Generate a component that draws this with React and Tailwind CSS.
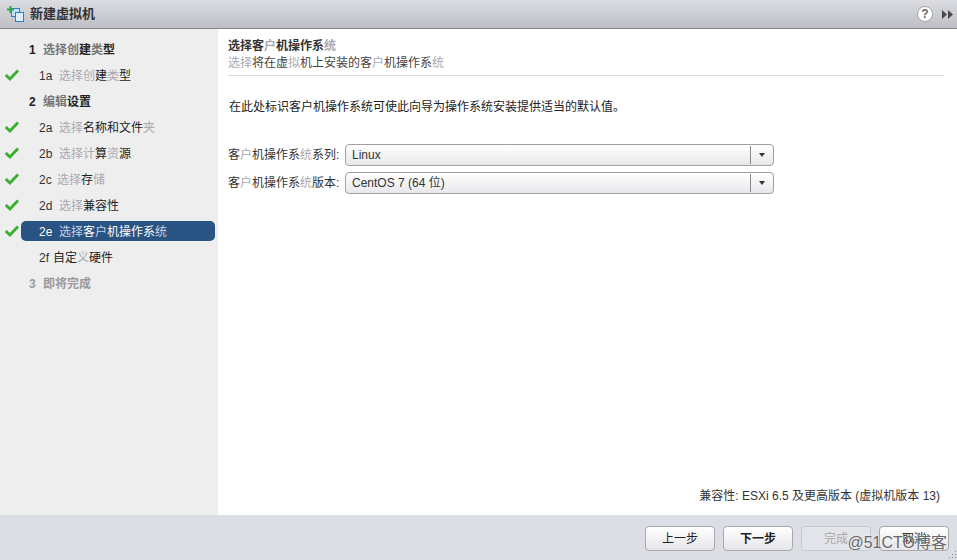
import React from "react";

const FONT = "font-['Liberation_Sans','Noto_Sans_CJK_SC',sans-serif]";

// characters that look washed out in the original
const Faint = ({ children, className = "text-[#a9a9b0]" }) => (
  <span className={className}>{children}</span>
);

const Check = () => (
  <svg width="14" height="12" viewBox="0 0 14 12" className="shrink-0">
    <path d="M0.8 6 L5 10 L13 1.5" fill="none" stroke="#38ad2f" strokeWidth="2.8" />
  </svg>
);

const Heading = ({ num, muted, children }) => (
  <div className={`flex h-[26px] items-center pl-[29px] pt-[2px] text-[12px] font-bold ${muted ? "text-[#9a9a9a]" : "text-[#222]"}`}>
    <span className="w-[14px]">{num}</span>
    <span>{children}</span>
  </div>
);

const Step = ({ num, done, active, numWidth = "w-[20px]", children }) => (
  <div className="flex h-[26px] items-center pl-[5px] pr-[3px] text-[12px]">
    <div className="w-[16px]">{done && <Check />}</div>
    <div className={`flex h-[20px] flex-1 items-center rounded-[5px] pl-[18px] pt-[2px] ${active ? "bg-[#295383] text-white" : "text-[#222]"}`}>
      <span className={`${numWidth} ${active ? "text-white" : "text-[#333]"}`}>{num}</span>
      <span>{children}</span>
    </div>
  </div>
);

const Select = ({ value }) => (
  <div className="flex h-[22px] w-[429px] items-center rounded-[4px] border border-[#a0a0a0] bg-gradient-to-b from-white to-[#e8e8ec]">
    <span className="flex-1 pl-[6px] text-[12px] text-[#333]">{value}</span>
    <div className="flex h-[18px] w-[23px] items-center justify-center border-l border-[#8a8a8a]">
      <svg width="6" height="4" viewBox="0 0 6 4">
        <path d="M0 0 H6 L3 4 Z" fill="#333" />
      </svg>
    </div>
  </div>
);

const Button = ({ children, bold, disabled }) => (
  <button
    className={`h-[25px] w-[70px] rounded-[4px] border text-[12px] ${
      disabled
        ? "border-[#c8c8cc] bg-[#e4e5ea] text-[#a8a8a8]"
        : "border-[#a8a8a8] bg-gradient-to-b from-white to-[#e6e6ea] text-[#222]"
    } ${bold ? "font-bold" : ""}`}
  >
    {children}
  </button>
);

export default function App() {
  return (
    <div className={`relative flex h-[560px] w-[957px] flex-col overflow-hidden bg-white ${FONT}`}>
      {/* title bar */}
      <div className="flex h-[29px] shrink-0 items-center border-b border-[#85858a] bg-gradient-to-b from-[#dcdde2] to-[#bebfc5] pl-[7px] pr-[4px]">
        <svg width="17" height="16" viewBox="0 0 17 16" className="mr-[6px]">
          <rect x="4.5" y="2.5" width="8" height="8" fill="#bfe0f8" stroke="#2a80d0" />
          <rect x="8.5" y="6.5" width="8" height="9" fill="#dceefb" stroke="#2a80d0" />
          <path d="M3.5 0 V7 M0 3.5 H7" stroke="#2fa84a" strokeWidth="2" />
        </svg>
        <span className="flex-1 text-[13px] font-bold text-[#333]">新建虚拟机</span>
        <div className="mr-[9px] flex h-[16px] w-[16px] items-center justify-center rounded-full border border-[#a5a5a5] bg-white text-[12px] font-bold leading-none text-[#666]">
          ?
        </div>
        <svg width="11" height="9" viewBox="0 0 11 9">
          <path d="M0 0 L5 4.5 L0 9 Z M6 0 L11 4.5 L6 9 Z" fill="#4a4a4a" />
        </svg>
      </div>

      <div className="flex min-h-0 flex-1">
        {/* left nav */}
        <div className="w-[218px] shrink-0 bg-[#eeeeee] pt-[7px]">
          <Heading num="1"><Faint className="text-[#777]">选择创</Faint>建<Faint className="text-[#777]">类</Faint>型</Heading>
          <Step num="1a" done><Faint>选择创</Faint>建<Faint>类</Faint>型</Step>
          <Heading num="2"><Faint className="text-[#777]">编辑</Faint>设置</Heading>
          <Step num="2a" done><Faint>选择</Faint>名称和文件<Faint>夹</Faint></Step>
          <Step num="2b" done><Faint>选择计</Faint>算<Faint>资</Faint>源</Step>
          <Step num="2c" done numWidth="w-[18px]"><Faint>选择</Faint>存<Faint>储</Faint></Step>
          <Step num="2d" done><Faint>选择</Faint>兼容性</Step>
          <Step num="2e" done active>
            <Faint className="text-[#c5d3e4]">选择</Faint>客<Faint className="text-[#c5d3e4]">户</Faint>机操作系<Faint className="text-[#c5d3e4]">统</Faint>
          </Step>
          <Step num="2f" numWidth="w-[14px]">自定<Faint>义</Faint>硬件</Step>
          <Heading num="3" muted>即将完成</Heading>
        </div>

        {/* content */}
        <div className="flex flex-1 flex-col pl-[10px] pr-[13px] pt-[9px]">
          <div className="border-b border-[#dcdcdc] pb-[3px]">
            <div className="text-[12px] font-bold leading-[17px] text-[#333]">选择客<Faint>户</Faint>机操作系<Faint>统</Faint></div>
            <div className="text-[12px] leading-[17px] text-[#444]">
              <Faint>选择</Faint>将在虚<Faint>拟</Faint>机上安装的客<Faint>户</Faint>机操作系<Faint>统</Faint>
            </div>
          </div>
          <p className="mt-[23px] pl-[1px] text-[12px] leading-[17px] text-[#222]">
            在此处标识客户机操作系统可使此向导为操作系统安装提供适当的默认值。
          </p>
          <div className="mt-[28px] flex flex-col gap-[6px]">
            <div className="flex items-center text-[12px] text-[#333]">
              <span className="w-[117px]">客<Faint>户</Faint>机操作系<Faint>统</Faint>系列:</span>
              <Select value="Linux" />
            </div>
            <div className="flex items-center text-[12px] text-[#333]">
              <span className="w-[117px]">客<Faint>户</Faint>机操作系<Faint>统</Faint>版本:</span>
              <Select value="CentOS 7 (64 位)" />
            </div>
          </div>
          <div className="mt-auto pb-[10px] pr-[4px] text-right text-[12px] text-[#333]">
            兼容性: ESXi 6.5 及更高版本 (虚拟机版本 13)
          </div>
        </div>
      </div>

      {/* footer */}
      <div className="flex h-[45px] shrink-0 items-start justify-end gap-[8px] bg-[#dcdee6] pr-[8px] pt-[11px]">
        <Button>上一步</Button>
        <Button bold>下一步</Button>
        <Button disabled>完成</Button>
        <Button>取消</Button>
      </div>

      {/* watermark */}
      <div className="absolute bottom-[5px] right-[10px] text-[16px] text-[#666] [text-shadow:0_0_2px_#fff]">@51CTO博客</div>

      {/* resize grip */}
      <svg width="10" height="10" viewBox="0 0 10 10" className="absolute bottom-0 right-0">
        <path d="M8 1h1v1H8z M5 4h1v1H5z M8 4h1v1H8z M2 7h1v1H2z M5 7h1v1H5z M8 7h1v1H8z" fill="#8a8a8a" />
      </svg>
    </div>
  );
}
